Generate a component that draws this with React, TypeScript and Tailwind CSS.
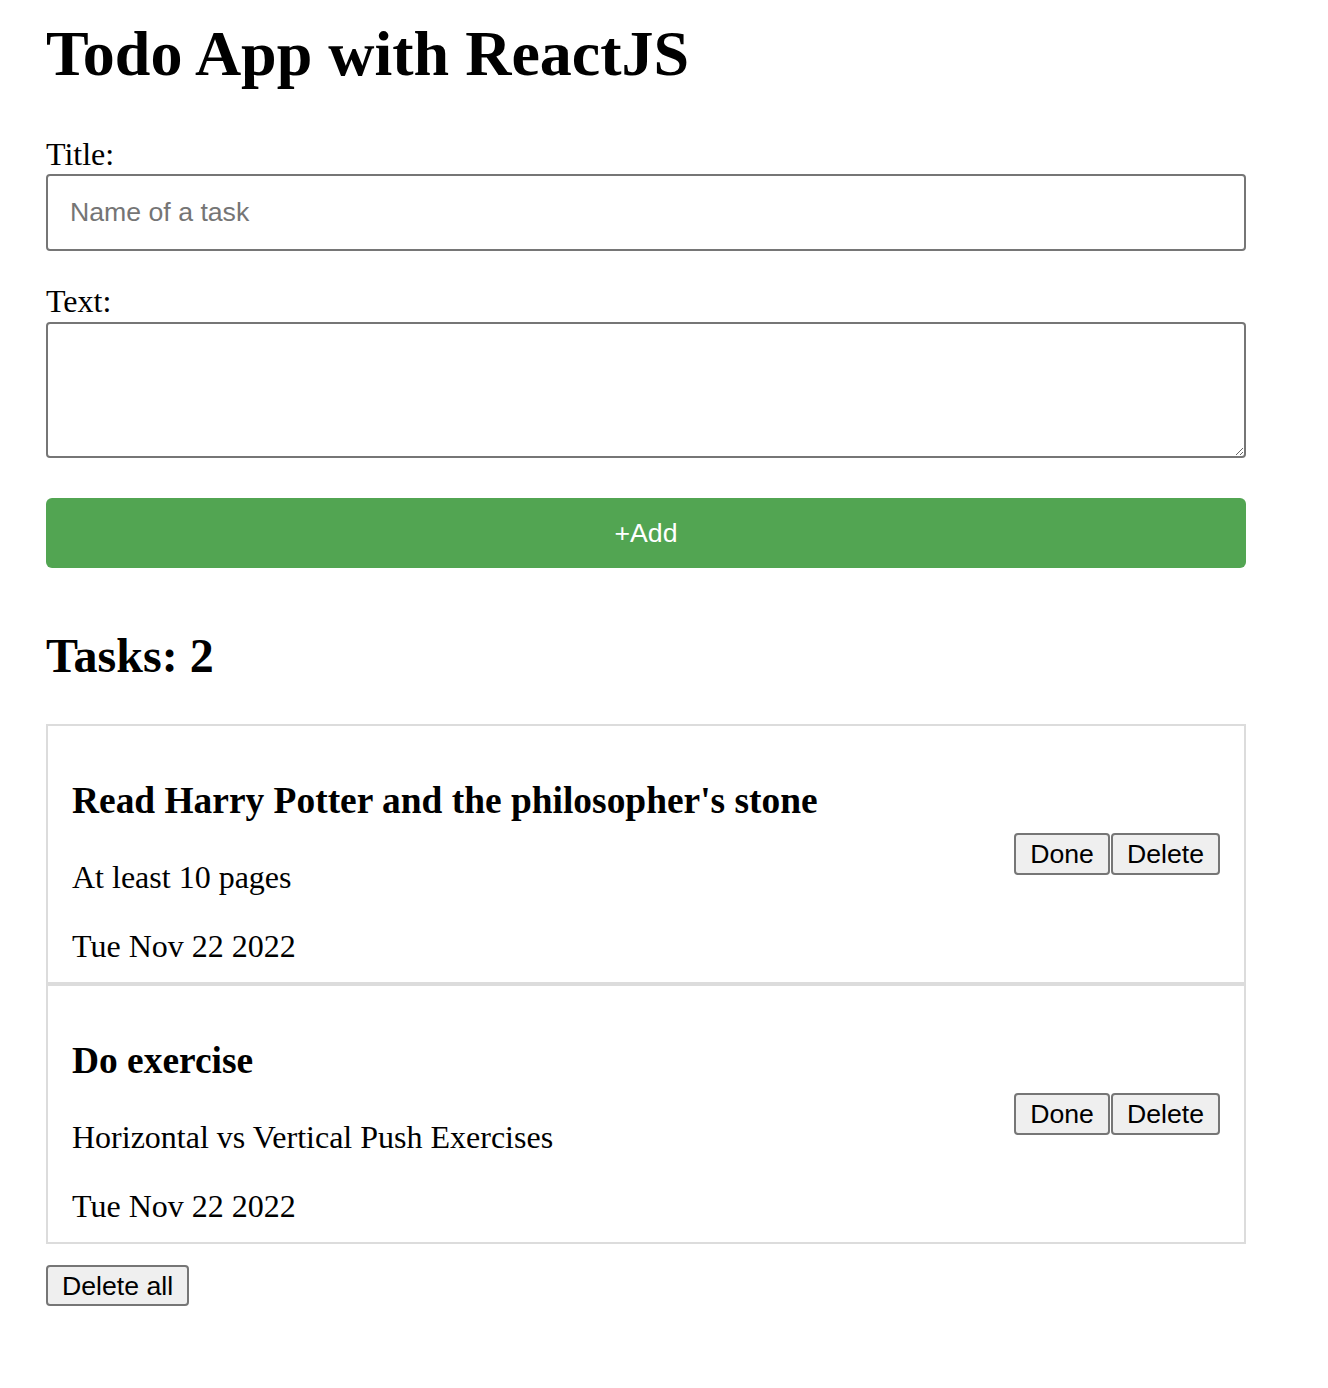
import { useState } from 'react';

interface Task {
  id: number;
  title: string;
  text: string;
  date: string;
}

const initialTasks: Task[] = [
  {
    id: 1,
    title: "Read Harry Potter and the philosopher's stone",
    text: 'At least 10 pages',
    date: 'Tue Nov 22 2022',
  },
  {
    id: 2,
    title: 'Do exercise',
    text: 'Horizontal vs Vertical Push Exercises',
    date: 'Tue Nov 22 2022',
  },
];

const serif = "font-['Liberation_Serif',serif]";
const sans = "font-['Liberation_Sans',Arial,sans-serif]";
const nativeButton =
  'h-[42px] px-[14px] border-2 border-[#767676] rounded-[4px] bg-[#efefef] text-[26.67px] leading-[30px] text-black';

export default function App() {
  const [tasks, setTasks] = useState<Task[]>(initialTasks);
  const [title, setTitle] = useState('');
  const [text, setText] = useState('');

  const handleAdd = () => {
    if (!title.trim()) return;
    setTasks([
      ...tasks,
      { id: Date.now(), title, text, date: new Date().toDateString() },
    ]);
    setTitle('');
    setText('');
  };

  const handleDelete = (id: number) => {
    setTasks(tasks.filter((t) => t.id !== id));
  };

  return (
    <div className={`min-h-[1388px] bg-white text-black ${serif}`}>
      <div className="w-[1246px] pl-[46px]">
        <h1 className="mt-[18px] text-[64px] leading-[71px] font-bold">
          Todo App with ReactJS
        </h1>

        {/* Form */}
        <label className="block mt-[47px] text-[32px] leading-[36px]">Title:</label>
        <input
          type="text"
          value={title}
          onChange={(e) => setTitle(e.target.value)}
          placeholder="Name of a task"
          className={`block mt-[2px] w-full h-[77px] px-[22px] border-2 border-[#767676] rounded-[4px] text-[26.67px] placeholder:text-[#757575] outline-none ${sans}`}
        />

        <label className="block mt-[32px] text-[32px] leading-[36px]">Text:</label>
        <textarea
          value={text}
          onChange={(e) => setText(e.target.value)}
          className={`block mt-[3px] w-full h-[136px] px-[22px] py-[10px] border-2 border-[#767676] rounded-[4px] text-[26.67px] outline-none ${sans}`}
        />

        <button
          onClick={handleAdd}
          className={`block mt-[40px] w-full h-[70px] rounded-[6px] bg-[#52a552] text-white text-[26.67px] ${sans}`}
        >
          +Add
        </button>

        {/* Task list */}
        <h2 className="mt-[61px] text-[48px] leading-[53px] font-bold">
          Tasks: {tasks.length}
        </h2>

        <div className="mt-[42px]">
          {tasks.map((task) => (
            <div
              key={task.id}
              className="flex items-center justify-between border-2 border-[#dcdcdc] px-[24px]"
            >
              <div className="pt-[54px] pb-[18px]">
                <h3 className="text-[37.44px] leading-[42px] font-bold">{task.title}</h3>
                <p className="mt-[37px] text-[32px] leading-[36px]">{task.text}</p>
                <p className="mt-[33px] text-[32px] leading-[36px]">{task.date}</p>
              </div>
              <div className={`flex gap-[1px] ${sans}`}>
                <button className={nativeButton}>Done</button>
                <button onClick={() => handleDelete(task.id)} className={nativeButton}>
                  Delete
                </button>
              </div>
            </div>
          ))}
        </div>

        <button
          onClick={() => setTasks([])}
          className={`mt-[21px] h-[41px] px-[14px] border-2 border-[#767676] rounded-[4px] bg-[#efefef] text-[26.67px] leading-[30px] ${sans}`}
        >
          Delete all
        </button>
      </div>
    </div>
  );
}
